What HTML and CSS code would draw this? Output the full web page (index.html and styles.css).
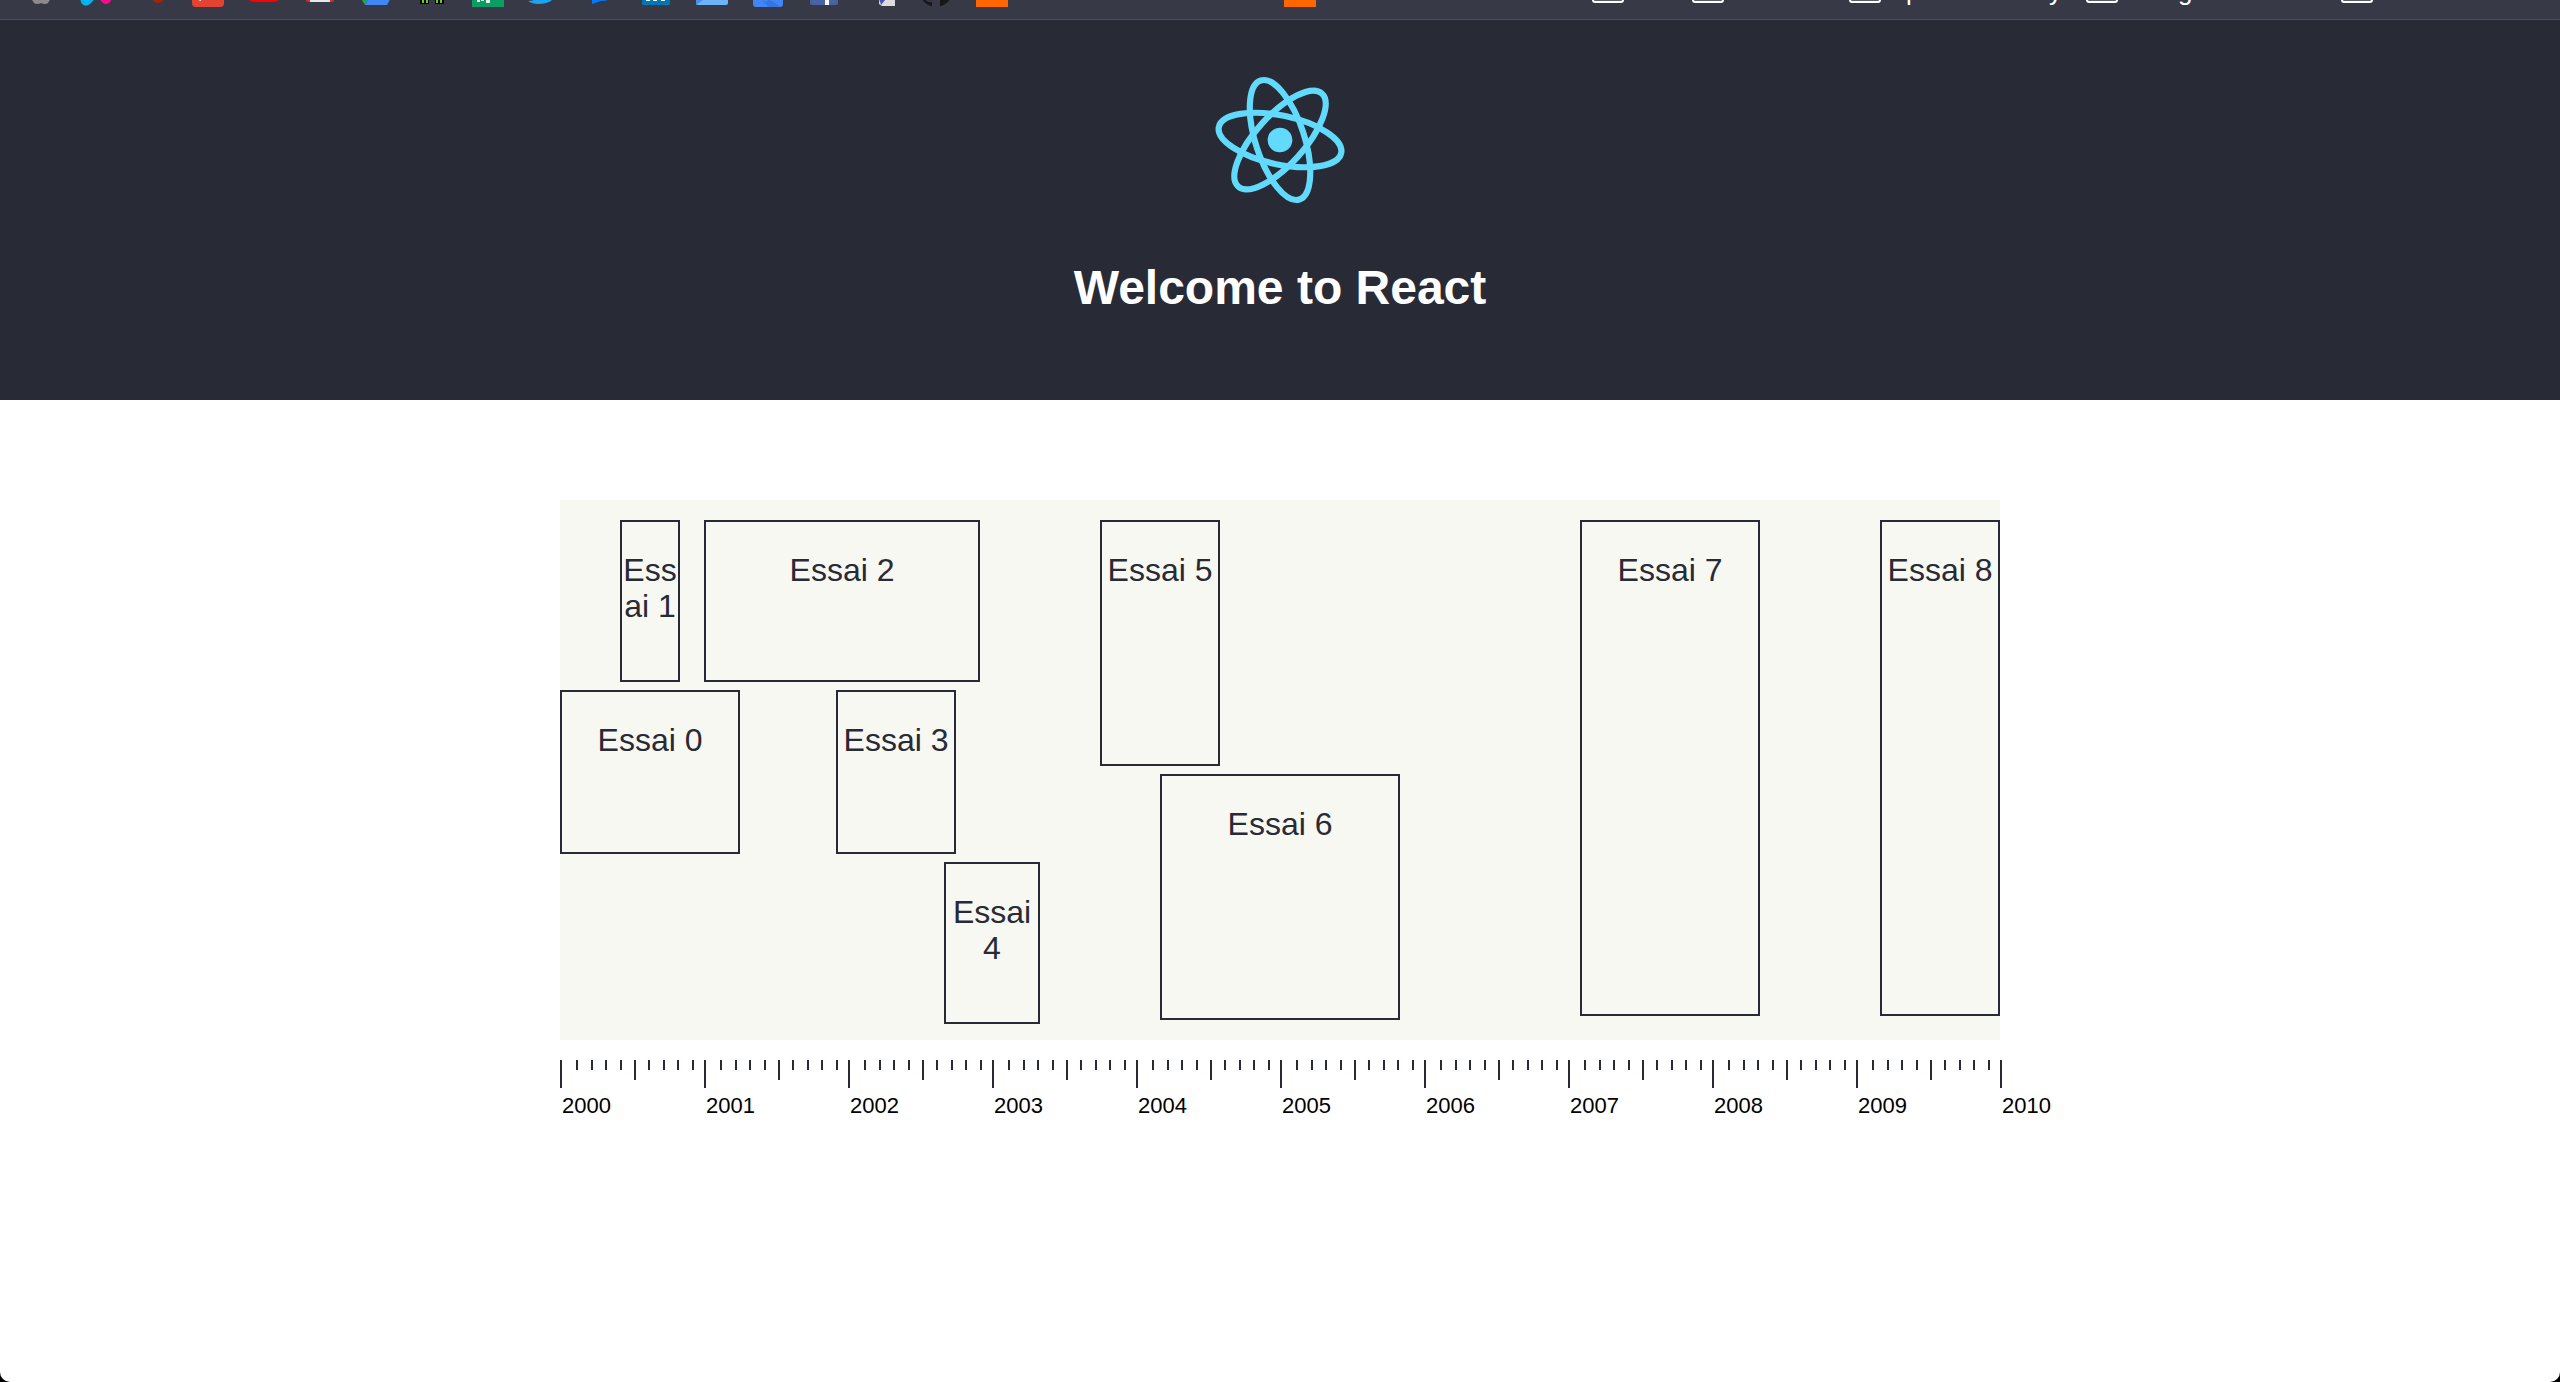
FILE: index.html
```html
<!DOCTYPE html>
<html lang="en">
<head>
<meta charset="utf-8">
<title>React App</title>
<link rel="stylesheet" href="styles.css">
</head>
<body>
<div class="page">
  <nav class="bookmarks" aria-label="Bookmarks">
    <svg class="icon" viewBox="0 -25 32 32"><path fill="#8b8b8b" d="M3-14C3-22 29-22 29-12C28-4 26 0 24 3Q21 5 17 3Q13 5 10 3Q8 0 5-5Z"/></svg>
    <svg class="icon" viewBox="0 -25 32 32"><path d="M9-20L26-1" stroke="#ff0a8c" stroke-width="10" stroke-linecap="round"/><path d="M24-18L6 0" stroke="#00b4f0" stroke-width="11" stroke-linecap="round"/></svg>
    <svg class="icon" viewBox="0 -25 32 32"><circle cx="22" cy="-3" r="6" fill="#a52508"/></svg>
    <svg class="icon" viewBox="0 -25 32 32"><rect y="-25" width="32" height="32" rx="4" fill="#e44332"/><path d="M4-2L9 0" stroke="#fff" stroke-width="2"/></svg>
    <svg class="icon" viewBox="0 -25 32 32"><rect y="-20" width="32" height="22" rx="6" fill="#f00"/></svg>
    <svg class="icon" viewBox="0 -25 32 32"><rect x="2" y="-20" width="28" height="22" rx="2" fill="#c5352b"/><rect x="6" y="-18" width="20" height="20" fill="#e8e8e8"/></svg>
    <svg class="icon" viewBox="0 -25 32 32"><path fill="#1da463" d="M0-3L10-20L14-10L5 5Z"/><path fill="#4285f4" d="M5 5L10-4H32L27 5Z"/></svg>
    <svg class="icon" viewBox="0 -25 32 32"><path fill="#000" d="M4-14H28V4H19V0H13V4H4Z"/><path fill="#64c832" d="M6-10H26V3H24V0H22V3H20V-1H12V3H10V0H8V3H6Z"/></svg>
    <svg class="icon" viewBox="0 -25 32 32"><path fill="#0b9d63" d="M0-25H32V7H0Z"/><path fill="#e4f2ec" d="M5 0H8V2H5ZM9-2H12V1H9ZM14 0H18V3H14Z"/></svg>
    <svg class="icon" viewBox="0 -25 32 32"><path fill="#1da1f2" d="M0 1Q6 1 9-2L2-18L16-10L29-16Q31 4 10 4Q4 4 0 1Z"/></svg>
    <svg class="icon" viewBox="0 -25 32 32"><path fill="#0078ff" d="M1-10A15 13 0 0 1 31-10Q31 1 17 1L8 4V0Q1-4 1-10Z"/></svg>
    <svg class="icon" viewBox="0 -25 32 32"><rect x="2" y="-22" width="28" height="27" rx="1" fill="#0077b5"/><path fill="#fff" d="M6-12H10V1H6ZM13-12H17V1H13ZM21-12H25V1H21Z"/></svg>
    <svg class="icon" viewBox="0 -25 32 32"><rect y="-20" width="32" height="25" rx="2" fill="#6db3f8"/><path fill="#4690e6" d="M0-4L10-2L0 5Z"/></svg>
    <svg class="icon" viewBox="0 -25 32 32"><rect x="1" y="-25" width="30" height="32" rx="3" fill="#4285f4"/><path fill="#3575e0" d="M10 0L14 2L17 0L22 2L28 7H17Z"/></svg>
    <svg class="icon" viewBox="0 -25 32 32"><rect x="2" y="-23" width="28" height="28" rx="2" fill="#4862a3"/><path fill="#fff" d="M17-15H21V5H17Z"/></svg>
    <svg class="icon" viewBox="0 -25 32 32"><path fill="#dcdcdc" d="M16-20H31V6H18L15 4Z"/><path fill="#4a50b5" d="M14-6H26L17 5Z"/></svg>
    <svg class="icon" viewBox="0 -25 32 32"><circle cx="16" cy="-9" r="16" fill="#17171a"/><path d="M12-3H20V8H12Z" fill="#373947"/><path d="M6-1Q9 2 12 1" stroke="#373947" stroke-width="2" fill="none"/></svg>
    <a class="bookmark wide" href="#"><svg class="icon" viewBox="0 -25 32 32"><path fill="#ff6600" d="M0-25H32V7H0Z"/></svg>Formation</a>
    <a class="bookmark wide" href="#"><svg class="icon" viewBox="0 -25 32 32"><path fill="#ff6600" d="M0-25H32V7H0Z"/></svg>Formation</a>
    <a class="bookmark" href="#"><svg class="icon" viewBox="0 -25 32 32"><rect class="folder" x="1" y="-19" width="30" height="21" rx="2"/></svg>CS</a>
    <a class="bookmark" href="#"><svg class="icon" viewBox="0 -25 32 32"><rect class="folder" x="1" y="-19" width="30" height="21" rx="2"/></svg>Science</a>
    <a class="bookmark" href="#"><svg class="icon" viewBox="0 -25 32 32"><rect class="folder" x="1" y="-19" width="30" height="21" rx="2"/></svg>Space Industry</a>
    <a class="bookmark" href="#"><svg class="icon" viewBox="0 -25 32 32"><rect class="folder" x="1" y="-19" width="30" height="21" rx="2"/></svg>Plong</a>
    <a class="bookmark last" href="#"><svg class="icon" viewBox="0 -25 32 32"><rect class="folder" x="1" y="-19" width="30" height="21" rx="2"/></svg>Autres favoris</a>
  </nav>

  <header class="header">
    <svg class="logo" viewBox="0 0 842 596" aria-label="React">
      <g transform="rotate(12 421 298)" fill="none" stroke="#61dafb" stroke-width="23">
        <ellipse cx="421" cy="298" rx="233" ry="91"/>
        <ellipse cx="421" cy="298" rx="233" ry="91" transform="rotate(60 421 298)"/>
        <ellipse cx="421" cy="298" rx="233" ry="91" transform="rotate(120 421 298)"/>
        <circle cx="421" cy="298" r="46" fill="#61dafb" stroke="none"/>
      </g>
    </svg>
    <h1 class="title">Welcome to React</h1>
  </header>

  <main class="timeline">
    <section class="chart">
      <div class="cluster three" style="grid-column: 1 / 41">
        <div class="task" style="grid-area: 2 / 1 / 3 / 16">Essai 0</div>
        <div class="task" style="grid-area: 1 / 6 / 2 / 11">Essai 1</div>
        <div class="task" style="grid-area: 1 / 13 / 2 / 36">Essai 2</div>
        <div class="task" style="grid-area: 2 / 24 / 3 / 34">Essai 3</div>
        <div class="task" style="grid-area: 3 / 33 / 4 / 41">Essai 4</div>
      </div>
      <div class="cluster two" style="grid-column: 46 / 71">
        <div class="task" style="grid-area: 1 / 1 / 2 / 11">Essai 5</div>
        <div class="task" style="grid-area: 2 / 6 / 3 / 26">Essai 6</div>
      </div>
      <div class="cluster one" style="grid-column: 86 / 101">
        <div class="task" style="grid-area: 1 / 1 / 2 / 16">Essai 7</div>
      </div>
      <div class="cluster one" style="grid-column: 111 / 121">
        <div class="task" style="grid-area: 1 / 1 / 2 / 11">Essai 8</div>
      </div>
    </section>
    <ol class="ruler">
      <li class="year"><div class="ticks"><i></i><i></i><i></i><i></i><i></i><i></i><i></i><i></i><i></i><i></i></div><span class="label">2000</span></li>
      <li class="year"><div class="ticks"><i></i><i></i><i></i><i></i><i></i><i></i><i></i><i></i><i></i><i></i></div><span class="label">2001</span></li>
      <li class="year"><div class="ticks"><i></i><i></i><i></i><i></i><i></i><i></i><i></i><i></i><i></i><i></i></div><span class="label">2002</span></li>
      <li class="year"><div class="ticks"><i></i><i></i><i></i><i></i><i></i><i></i><i></i><i></i><i></i><i></i></div><span class="label">2003</span></li>
      <li class="year"><div class="ticks"><i></i><i></i><i></i><i></i><i></i><i></i><i></i><i></i><i></i><i></i></div><span class="label">2004</span></li>
      <li class="year"><div class="ticks"><i></i><i></i><i></i><i></i><i></i><i></i><i></i><i></i><i></i><i></i></div><span class="label">2005</span></li>
      <li class="year"><div class="ticks"><i></i><i></i><i></i><i></i><i></i><i></i><i></i><i></i><i></i><i></i></div><span class="label">2006</span></li>
      <li class="year"><div class="ticks"><i></i><i></i><i></i><i></i><i></i><i></i><i></i><i></i><i></i><i></i></div><span class="label">2007</span></li>
      <li class="year"><div class="ticks"><i></i><i></i><i></i><i></i><i></i><i></i><i></i><i></i><i></i><i></i></div><span class="label">2008</span></li>
      <li class="year"><div class="ticks"><i></i><i></i><i></i><i></i><i></i><i></i><i></i><i></i><i></i><i></i></div><span class="label">2009</span></li>
      <li class="year end"><div class="ticks"></div><span class="label">2010</span></li>
    </ol>
  </main>
</div>
</body>
</html>
```

FILE: styles.css
```css
* {
  box-sizing: border-box;
}

html {
  background: #000;
}

body {
  margin: 0;
  font-family: "Liberation Sans", Arial, sans-serif;
}

.page {
  min-height: 100vh;
  background: #fff;
  border-radius: 0 0 10px 10px;
  overflow: hidden;
}

/* Bookmarks strip, scrolled so that only its lower edge shows */
.bookmarks {
  display: flex;
  align-items: flex-end;
  gap: 24px;
  height: 20px;
  padding: 0 20px 12px 24px;
  background: #373947;
  border-bottom: 1px solid #4d4f58;
  overflow: hidden;
}

.icon {
  flex: none;
  display: block;
  width: 32px;
  height: 32px;
}

.bookmark {
  display: flex;
  flex: none;
  align-items: flex-end;
  gap: 8px;
  color: #fff;
  font-size: 26px;
  line-height: 32px;
  text-decoration: none;
  white-space: nowrap;
}

.wide {
  width: 284px;
}

.last {
  margin-left: auto;
}

.folder {
  fill: #5a5c69;
  stroke: #fff;
  stroke-width: 2px;
}

.header {
  display: flex;
  flex-direction: column;
  align-items: center;
  gap: 40px;
  padding: 40px 40px 84px;
  background: #282a36;
  color: #fff;
}

.logo {
  height: 160px;
}

.title {
  margin: 0;
  font-size: 48px;
  line-height: 56px;
}

.timeline {
  width: 100%;
  max-width: 1440px;
  margin: 100px auto;
}

/* One column for each month */
.chart {
  display: grid;
  grid-template-columns: repeat(120, 1fr);
  align-items: start;
  padding: 20px 0 16px;
  background: #f8f8f2;
  color: #282a36;
}

.cluster {
  display: grid;
  grid-template-columns: subgrid;
  row-gap: 8px;
}

.three {
  grid-template-rows: 162px 164px 162px;
}

.two {
  grid-template-rows: 246px 246px;
}

.one {
  grid-template-rows: 496px;
}

.task {
  min-width: 0;
  padding-top: 30px;
  border: 2px solid #282a36;
  font-size: 32px;
  line-height: 36px;
  text-align: center;
  overflow-wrap: anywhere;
}

.ruler {
  display: flex;
  margin: 20px 0 0;
  padding: 0;
  list-style: none;
}

.year {
  flex: 1 1 0;
  min-width: 0;
}

.end {
  flex: 0 0 0;
}

.ticks {
  display: grid;
  grid-template-columns: repeat(10, 1fr);
  height: 28px;
  margin-right: -2px;
  border-left: 2px solid #282a36;
}

.ticks i {
  height: 10px;
  border-left: 2px solid #282a36;
}

.ticks i:first-child {
  visibility: hidden;
}

.ticks i:nth-child(6) {
  height: 20px;
}

.label {
  display: block;
  margin-top: 6px;
  padding-left: 2px;
  color: #000;
  font-size: 22px;
  line-height: 24px;
}
```
